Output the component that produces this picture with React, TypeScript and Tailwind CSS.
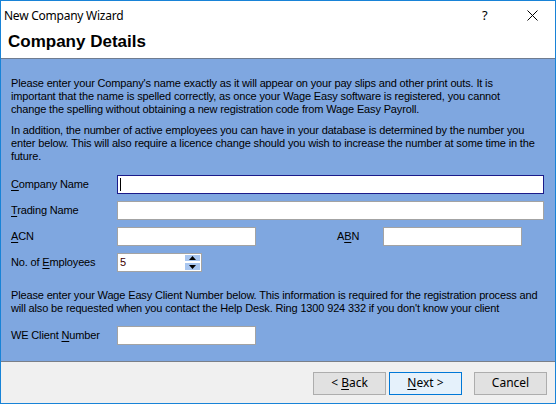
import { useState } from "react"

// first letter access-key underline, like the old win32 labels
function Key({ children }: { children: string }) {
  return <span className="underline underline-offset-[2px] decoration-[1px]">{children}</span>
}

function Field({ width, focused, value }: { width: string; focused?: boolean; value?: string }) {
  return (
    <div className={`${width} h-[19px] bg-white border flex items-center px-[2px] ${focused ? "border-[#1b1b8a]" : "border-[#a3a3a3]"}`}>
      {focused && <div className="w-px h-[13px] bg-black" />}
      {value && <span>{value}</span>}
    </div>
  )
}

function Spinner({ value }: { value: number }) {
  return (
    <div className="w-[85px] h-[19px] bg-white border border-[#a3a3a3] flex items-center justify-between pl-[2px] pr-[1px]">
      <span className="text-[#400000]">{value}</span>
      <div className="flex flex-col gap-[2px]">
        <div className="w-[15px] h-[6px] bg-[#a8c6f0] flex items-center justify-center">
          <svg width="7" height="4" viewBox="0 0 7 4"><path d="M0 4 L3.5 0 L7 4 Z" fill="#000" /></svg>
        </div>
        <div className="w-[15px] h-[7px] bg-[#a8c6f0] flex items-center justify-center">
          <svg width="7" height="4" viewBox="0 0 7 4"><path d="M0 0 L7 0 L3.5 4 Z" fill="#000" /></svg>
        </div>
      </div>
    </div>
  )
}

function WizButton({ children, primary }: { children: React.ReactNode; primary?: boolean }) {
  return (
    <button
      className={`w-[73px] h-[23px] border text-[12px] flex items-center justify-center whitespace-pre ${
        primary ? "bg-[#e5f1fb] border-[#0078d7]" : "bg-[#e1e1e1] border-[#adadad]"
      }`}
      style={{ fontFamily: '"Noto Sans", "Open Sans", sans-serif' }}
    >
      {children}
    </button>
  )
}

export default function App() {
  const [employees] = useState(5)

  return (
    <div className="w-[556px] h-[404px] border border-[#1883d7] bg-white flex flex-col text-black">
      {/* title bar */}
      <div className="h-[29px] shrink-0 flex items-center pl-[3px] text-[12px] tracking-[-0.25px]" style={{ fontFamily: '"Noto Sans", "Open Sans", sans-serif' }}>
        <span className="flex-1">New Company Wizard</span>
        <span className="w-[10px] mr-[35px] text-[13px]">?</span>
        <svg width="11" height="11" viewBox="0 0 11 11" className="mr-[17px]">
          <path d="M0.5 0.5 L10.5 10.5 M10.5 0.5 L0.5 10.5" stroke="#000" strokeWidth="1" />
        </svg>
      </div>

      {/* page header */}
      <div className="h-[29px] shrink-0 pl-[7px] pt-[2px] border-b border-[#6f7c90]">
        <h1 className="text-[17px] font-bold leading-[20px]" style={{ fontFamily: '"Liberation Sans", Arial, sans-serif' }}>
          Company Details
        </h1>
      </div>

      {/* form body */}
      <div
        className="flex-1 bg-[#7fa7e0] pl-[10px] pr-[9px] pt-[18px] text-[11px] leading-[13px] tracking-[-0.15px] border-b border-[#7a7f88] whitespace-nowrap"
        style={{ fontFamily: '"Liberation Sans", Arial, sans-serif' }}
      >
        <p>
          Please enter your Company's name exactly as it will appear on your pay slips and other print outs. It is<br />
          important that the name is spelled correctly, as once your Wage Easy software is registered, you cannot<br />
          change the spelling without obtaining a new registration code from Wage Easy Payroll.
        </p>
        <p className="mt-[8px]">
          In addition, the number of active employees you can have in your database is determined by the number you<br />
          enter below. This will also require a licence change should you wish to increase the number at some time in the<br />
          future.
        </p>

        <div className="mt-[12px] flex flex-col gap-[7px]">
          <div className="flex items-center">
            <label className="w-[106px]"><Key>C</Key>ompany Name</label>
            <Field width="w-[427px]" focused />
          </div>
          <div className="flex items-center">
            <label className="w-[106px]"><Key>T</Key>rading Name</label>
            <Field width="w-[427px]" />
          </div>
          <div className="flex items-center">
            <label className="w-[106px]"><Key>A</Key>CN</label>
            <Field width="w-[139px]" />
            <label className="ml-[81px] w-[46px]">A<Key>B</Key>N</label>
            <Field width="w-[139px]" />
          </div>
          <div className="flex items-center">
            <label className="w-[106px]">No. of <Key>E</Key>mployees</label>
            <Spinner value={employees} />
          </div>
        </div>

        <p className="mt-[17px]">
          Please enter your Wage Easy Client Number below. This information is required for the registration process and<br />
          will also be requested when you contact the Help Desk. Ring 1300 924 332 if you don't know your client
        </p>

        <div className="mt-[11px] flex items-center">
          <label className="w-[106px]">WE Client <Key>N</Key>umber</label>
          <Field width="w-[139px]" />
        </div>
      </div>

      {/* button strip */}
      <div className="h-[41px] shrink-0 bg-[#f0f0f0] flex items-center justify-end pr-[8px] pt-[1px]">
        <WizButton>{"< "}<Key>B</Key>ack</WizButton>
        <div className="w-[3px]" />
        <WizButton primary><Key>N</Key>{"ext >"}</WizButton>
        <div className="w-[12px]" />
        <WizButton>Cancel</WizButton>
      </div>
    </div>
  )
}
